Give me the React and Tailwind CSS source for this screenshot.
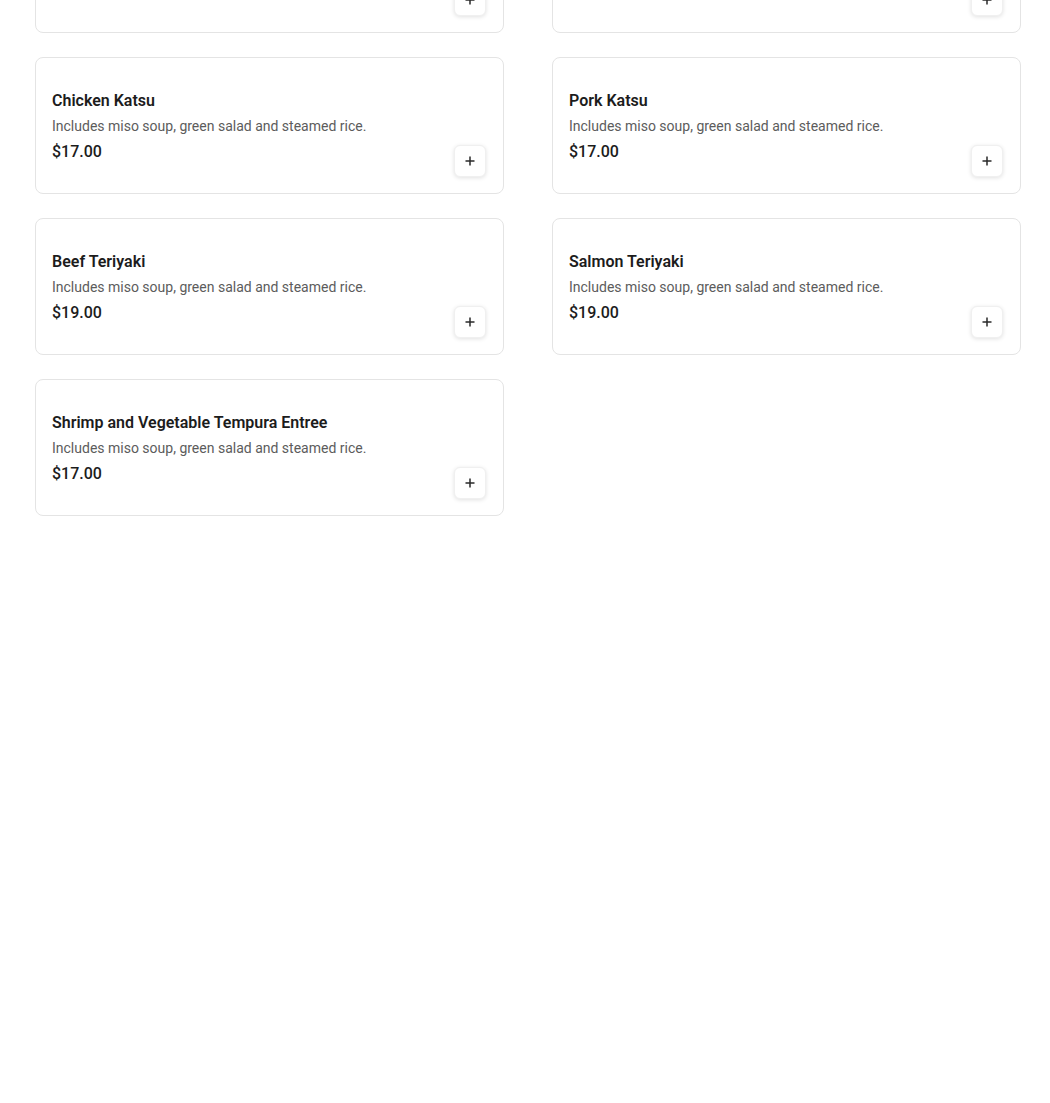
import React from "react";

const items = [
  { name: "Hidden One", price: "$15.00" },
  { name: "Hidden Two", price: "$15.00" },
  { name: "Chicken Katsu", price: "$17.00" },
  { name: "Pork Katsu", price: "$17.00" },
  { name: "Beef Teriyaki", price: "$19.00" },
  { name: "Salmon Teriyaki", price: "$19.00" },
  { name: "Shrimp and Vegetable Tempura Entree", price: "$17.00" },
];

function Plus() {
  return (
    <svg width="10" height="10" viewBox="0 0 10 10" fill="none">
      <path d="M5 0.5v9M0.5 5h9" stroke="#2a2a2a" strokeWidth="1.5" />
    </svg>
  );
}

function Card({ item }) {
  return (
    <div className="h-[137px] rounded-lg border border-[#e4e4e4] bg-white p-4 flex justify-between">
      <div className="flex flex-col pt-[15px]">
        <div className="text-[16px] leading-6 font-semibold text-[#1c1c1c]">{item.name}</div>
        <div className="mt-[3px] text-[14px] leading-5 text-[#5c5c5c]">
          Includes miso soup, green salad and steamed rice.
        </div>
        <div className="mt-[4px] text-[16px] leading-6 font-medium text-[#1c1c1c]">{item.price}</div>
      </div>
      <div className="flex items-end">
        <button className="w-8 h-8 mr-px rounded-md border border-[#f0f0f0] bg-white shadow-[0_1px_4px_rgba(0,0,0,0.12)] flex items-center justify-center">
          <Plus />
        </button>
      </div>
    </div>
  );
}

export default function App() {
  return (
    <div className="min-h-[1103px] bg-white" style={{ fontFamily: "Roboto, 'Noto Sans', sans-serif" }}>
      <div className="ml-[35px] w-[986px] -mt-[104px] grid grid-cols-2 gap-x-12 gap-y-6">
        {items.map((it, i) => (
          <Card key={i} item={it} />
        ))}
      </div>
    </div>
  );
}
